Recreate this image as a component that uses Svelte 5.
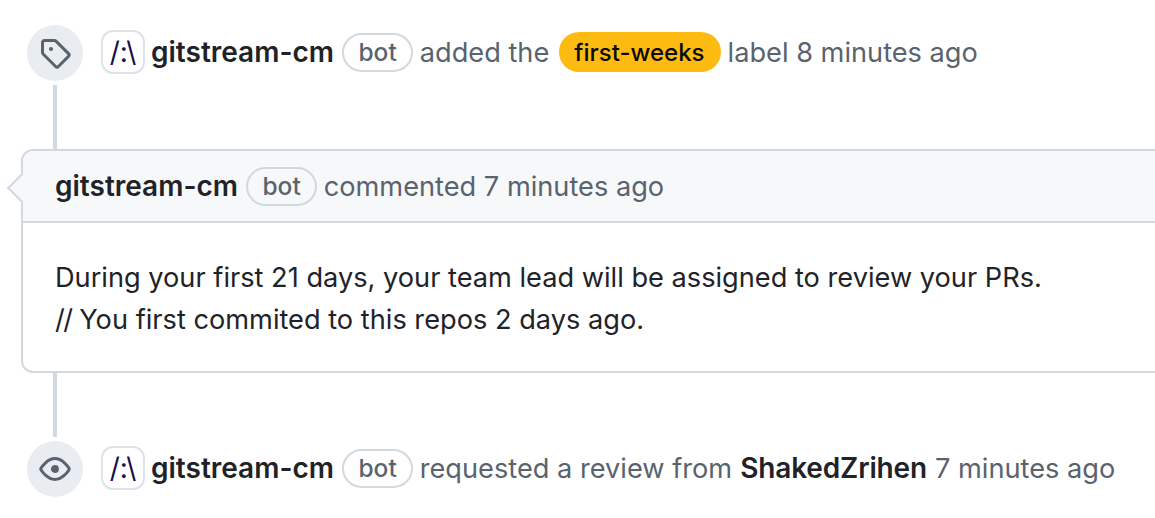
<script>
  const botBadge = 'bot';
</script>

<main class="timeline">
  <div class="event">
    <span class="badge">
      <svg viewBox="0 0 16 16" width="32" height="32" fill="#59636e"><path d="M1 7.775V2.75C1 1.784 1.784 1 2.75 1h5.025c.464 0 .91.184 1.238.513l6.25 6.25a1.75 1.75 0 0 1 0 2.474l-5.026 5.026a1.75 1.75 0 0 1-2.474 0l-6.25-6.25A1.752 1.752 0 0 1 1 7.775Zm1.5 0c0 .066.026.13.073.177l6.25 6.25a.25.25 0 0 0 .354 0l5.025-5.025a.25.25 0 0 0 0-.354l-6.25-6.25a.25.25 0 0 0-.177-.073H2.75a.25.25 0 0 0-.25.25ZM6 5a1 1 0 1 1 0 2 1 1 0 0 1 0-2Z"/></svg>
    </span>
    <p class="line">
      <span class="avatar">/:\</span>
      <b>gitstream-cm</b>
      <span class="bot">{botBadge}</span>
      <span>added the</span>
      <span class="label">first-weeks</span>
      <span>label 8 minutes ago</span>
    </p>
  </div>

  <div class="connector first"></div>

  <section class="card">
    <span class="caret"></span>
    <header>
      <b>gitstream-cm</b>
      <span class="bot">{botBadge}</span>
      <span>commented 7 minutes ago</span>
    </header>
    <div class="body">
      <p>During your first 21 days, your team lead will be assigned to review your PRs.</p>
      <p><span class="slashes">//</span> You first commited to this repos 2 days ago.</p>
    </div>
  </section>

  <div class="connector second"></div>

  <div class="event">
    <span class="badge">
      <svg viewBox="0 0 16 16" width="32" height="32" fill="#59636e"><path d="M8 2c1.981 0 3.671.992 4.933 2.078 1.27 1.091 2.187 2.345 2.637 3.023a1.62 1.62 0 0 1 0 1.798c-.45.678-1.367 1.932-2.637 3.023C11.67 13.008 9.981 14 8 14c-1.981 0-3.671-.992-4.933-2.078C1.797 10.83.88 9.576.43 8.898a1.62 1.62 0 0 1 0-1.798c.45-.677 1.367-1.931 2.637-3.022C4.33 2.992 6.019 2 8 2ZM1.679 7.932a.12.12 0 0 0 0 .136c.411.622 1.241 1.75 2.366 2.717C5.176 11.758 6.527 12.5 8 12.5c1.473 0 2.825-.742 3.955-1.715 1.124-.967 1.954-2.096 2.366-2.717a.12.12 0 0 0 0-.136c-.412-.621-1.242-1.75-2.366-2.717C10.824 4.242 9.473 3.5 8 3.5c-1.473 0-2.825.742-3.955 1.715-1.124.967-1.954 2.096-2.366 2.717ZM8 10a2 2 0 1 1-.001-3.999A2 2 0 0 1 8 10Z"/></svg>
    </span>
    <p class="line">
      <span class="avatar">/:\</span>
      <b>gitstream-cm</b>
      <span class="bot">{botBadge}</span>
      <span>requested a review from</span>
      <b class="name">ShakedZrihen</b>
      <span>7 minutes ago</span>
    </p>
  </div>
</main>

<style>
  :global(body) {
    margin: 0;
    background: #fff;
    overflow: hidden;
  }
  .timeline {
    width: 1155px;
    height: 518px;
    overflow: hidden;
    padding-top: 25px;
    box-sizing: border-box;
    font-family: Inter, "Noto Sans", sans-serif;
    font-size: 27.2px;
    color: #59636e;
  }
  p { margin: 0; }
  b { font-size: 28px; font-weight: 600; color: #1f2328; }
  .name { letter-spacing: -0.15px; }
  .slashes { letter-spacing: -1.5px; }
  .event {
    display: flex;
    align-items: center;
    height: 56px;
    padding-left: 27px;
  }
  .badge {
    flex: none;
    width: 56px;
    height: 56px;
    border-radius: 50%;
    background: #e9ecf1;
    display: flex;
    align-items: center;
    justify-content: center;
    margin-right: 18px;
  }
  .line {
    display: flex;
    align-items: center;
    white-space: nowrap;
    margin-bottom: 2px;
  }
  .line > * { margin-right: 8px; }
  .line > .avatar {
    box-sizing: border-box;
    width: 44px;
    height: 44px;
    margin-right: 6px;
    border: 2px solid #dfe2e6;
    border-radius: 12px;
    display: flex;
    align-items: center;
    justify-content: center;
    color: #14104a;
    font-size: 28px;
    font-weight: 400;
  }
  .bot {
    box-sizing: border-box;
    height: 39px;
    padding: 0 14px 0 14.5px;
    border: 2px solid #d1d9e0;
    border-radius: 20px;
    display: inline-flex;
    align-items: center;
    font-size: 24.5px;
    font-weight: 500;
  }
  .line > .bot { margin-right: 7px; }
  header .bot { margin-right: -1px; }
  .line > .label { margin-left: 2px; margin-right: 7px; }
  .label {
    height: 40px;
    padding: 0 16px 0 15px;
    border-radius: 20px;
    background: #fdba11;
    color: #0a0a0a;
    display: inline-flex;
    align-items: center;
    font-size: 24px;
    font-weight: 500;
  }
  .connector {
    width: 4px;
    margin-left: 53px;
    background: #d1d9e0;
  }
  .connector.first { height: 64px; margin-top: 4px; }
  .connector.second { height: 64px; margin-bottom: 4px; }
  .card {
    position: relative;
    box-sizing: border-box;
    height: 224px;
    margin-left: 21px;
    width: 1160px;
    border: 2px solid #d1d9e0;
    border-radius: 12px;
    background: #fff;
  }
  .card header {
    box-sizing: border-box;
    height: 72px;
    padding-left: 32px;
    display: flex;
    align-items: center;
    gap: 8px;
    background: #f6f8fa;
    border-bottom: 2px solid #d1d9e0;
    border-radius: 10px 10px 0 0;
  }
  .caret {
    position: absolute;
    left: -12px;
    top: 27px;
    width: 20px;
    height: 20px;
    background: #f6f8fa;
    border-left: 2px solid #d1d9e0;
    border-bottom: 2px solid #d1d9e0;
    transform: rotate(45deg);
    box-sizing: border-box;
  }
  .body {
    padding: 34px 32px 0;
    color: #1f2328;
    line-height: 42px;
  }
</style>
